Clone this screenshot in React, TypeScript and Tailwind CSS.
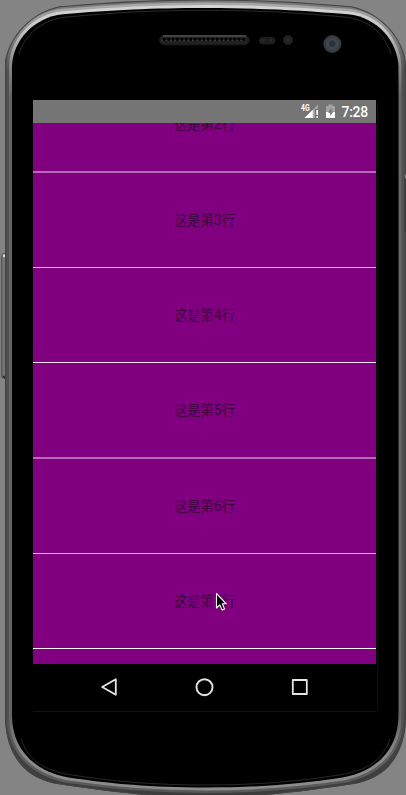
import React from "react";

const outer =
  "M5 66 C5 44 26 13 60 6.3 C110 2 150 -0.5 205.5 -0.5 C261 -0.5 301 2 351 6.3 C385 13 406 44 406 66 V715 C406 754 387 780 350 784.5 C300 792 261 797 205.5 797 C150 797 111 792 61 784.5 C24 780 5 754 5 715 Z";
const inner =
  "M12 66 C13 41 33 17.5 63 14.3 C112 10 152 8 205.5 8 C259 8 299 10 348 14.3 C378 17.5 397 41 398.5 66 V715 C398.5 746 381 769.5 344 777.3 C299 784 260 787.5 205.5 787.5 C151 787.5 112 784 67 777.3 C30 769.5 12 746 12 715 Z";

const holes = Array.from({ length: 19 }, (_, i) => 164 + i * 4.4);

function Bezel() {
  return (
    <svg className="absolute inset-0" width="406" height="795" viewBox="0 0 406 795">
      <defs>
        <linearGradient id="rim" x1="0" y1="0" x2="0" y2="795" gradientUnits="userSpaceOnUse">
          <stop offset="0" stopColor="#7c7c7c" />
          <stop offset="0.04" stopColor="#6c6c6c" />
          <stop offset="0.09" stopColor="#4c4c4c" />
          <stop offset="0.9" stopColor="#464646" />
          <stop offset="1" stopColor="#3c3c3c" />
        </linearGradient>
        <linearGradient id="glow" x1="0" y1="0" x2="0" y2="795" gradientUnits="userSpaceOnUse">
          <stop offset="0" stopColor="#adadad" />
          <stop offset="0.04" stopColor="#8c8c8c" />
          <stop offset="0.09" stopColor="#505050" />
          <stop offset="0.9" stopColor="#505050" />
          <stop offset="0.95" stopColor="#606060" />
          <stop offset="1" stopColor="#585858" />
        </linearGradient>
        <linearGradient id="shine" x1="0" y1="0" x2="0" y2="795" gradientUnits="userSpaceOnUse">
          <stop offset="0" stopColor="#d8d8d8" />
          <stop offset="0.04" stopColor="#c4c4c4" />
          <stop offset="0.08" stopColor="#8a8a8a" />
          <stop offset="0.12" stopColor="#666" />
          <stop offset="0.9" stopColor="#646464" />
          <stop offset="0.95" stopColor="#8a8a8a" />
          <stop offset="1" stopColor="#8c8c8c" />
        </linearGradient>
        <clipPath id="body">
          <path d={outer} />
        </clipPath>
      </defs>
      <rect x="1.7" y="253.5" width="7" height="125" rx="2.5" fill="#757575" stroke="#484848" strokeWidth="0.9" />
      <circle cx="4.2" cy="255.7" r="1.5" fill="#ddd" />
      <path d="M3 376 L6 378.5" stroke="#222" strokeWidth="1.5" />
      <path d={outer} fill="url(#rim)" />
      <g clipPath="url(#body)">
        <path d={inner} fill="none" stroke="url(#glow)" strokeWidth="11" />
        <path d={inner} fill="none" stroke="url(#shine)" strokeWidth="6" />
        <path d={outer} fill="none" stroke="#444" strokeWidth="1.8" />
      </g>
      <rect x="404.5" y="175" width="3" height="57" fill="#3c3c3c" />
      <rect x="404.8" y="174.5" width="2" height="4" fill="#888" />
      <path d={inner} fill="#000" />
      <path
        d="M19 54 C26 32 44 19 67 17 C115 12.5 155 10.3 205.5 10.3 C256 10.3 296 12.5 344 17 C367 19 384 32 391 54"
        fill="none" stroke="#303030" strokeWidth="0.9"
      />
      <path
        d="M21 739 C29 762 45 770 69 774.5 C113 781.5 153 785 205.5 785 C258 785 298 781.5 342 774.5 C366 770 382 762 390 739"
        fill="none" stroke="#2c2c2c" strokeWidth="0.9"
      />
      <rect x="159.5" y="35.5" width="89.5" height="9.3" rx="4.6" fill="#202020" stroke="#222" strokeWidth="0.7" />
      <path d="M163 36 H246" stroke="#666" strokeWidth="1.2" />
      {holes.map((x) => (
        <g key={x}>
          <rect x={x - 1} y="38" width="2.6" height="2.6" fill="#000" />
          <rect x={x - 2.8} y="40.2" width="1.8" height="1" fill="#444" />
        </g>
      ))}
      <rect x="259" y="37" width="16.5" height="7.5" rx="3.7" fill="#1d1d1d" />
      <circle cx="263.5" cy="40.5" r="1.5" fill="#292929" />
      <circle cx="271" cy="40.5" r="1.5" fill="#292929" />
      <circle cx="288" cy="40" r="5" fill="#1f1f1f" />
      <circle cx="288" cy="40" r="2" fill="#303030" />
      <circle cx="332.3" cy="44" r="9" fill="#353b42" />
      <circle cx="332.3" cy="44" r="6.5" fill="#3f464e" />
      <circle cx="332.3" cy="43.8" r="3.2" fill="#2a3036" />
      <path d="M33 711.5 H376 M377.5 101 V710" stroke="#0f0f0f" strokeWidth="1" fill="none" />
    </svg>
  );
}

function StatusBar() {
  return (
    <div className="flex h-[23px] items-center justify-end bg-[#757575] pr-[8px]">
      <svg width="40" height="23" viewBox="300 100 40 23" className="mr-[2px] shrink-0">
        <text x="302" y="110.8" fill="#fff" fontSize="8.5" fontWeight="700" textLength="8.5" lengthAdjust="spacingAndGlyphs" fontFamily="Roboto, sans-serif">4G</text>
        <path d="M305.5 118 L319 104.5 V109 H316 V118 Z" fill="#a5a5a5" />
        <path d="M305.5 118 L313.8 109.7 V118 Z" fill="#fff" />
        <path d="M318.2 110 V115 M318.2 116.3 V118" stroke="#fff" strokeWidth="1.6" />
        <path d="M327 106 H329.5 V104.5 H333.5 V106 H336 V118 H327 Z" fill="#a3a3a3" />
        <path d="M327 112 H336 V118 H327 Z" fill="#fff" />
        <path d="M332.5 107.5 L329 112.8 H331.2 V116 L334.5 111.4 H332.5 Z" fill="#757575" />
      </svg>
      <span className="pt-px font-[Roboto,sans-serif] text-[14px] leading-[22px] font-medium tracking-[-0.25px] text-white">7:28</span>
    </div>
  );
}

const rows = [
  { n: 2, cls: "h-[95px]", line: "h-[2px] bg-[#b56ab5]" },
  { n: 3, cls: "h-[95px]", line: "h-px bg-[#dbb7db]" },
  { n: 4, cls: "h-[95px]", line: "h-px bg-[#f2e4f2]" },
  { n: 5, cls: "h-[96px]", line: "h-[2px] bg-[#b56ab5]" },
  { n: 6, cls: "h-[95px]", line: "h-px bg-[#dbb7db]" },
  { n: 7, cls: "h-[95px]", line: "h-px bg-[#fbf5fb]" },
];

function List() {
  return (
    <div className="h-[541px] overflow-hidden bg-[#800080]">
      <div className="-mt-[45px]">
        {rows.map((r) => (
          <div key={r.n} className={`flex flex-col ${r.cls}`}>
            <div className="flex flex-1 items-center justify-center text-[13.2px] leading-5 text-[#3e063e]">
              <span>
                这是第<span className="font-[Roboto,sans-serif] text-[14px]">{r.n}</span>行
              </span>
            </div>
            <div className={`shrink-0 ${r.line}`} />
          </div>
        ))}
      </div>
    </div>
  );
}

function NavBar() {
  return (
    <div className="flex h-[47px] items-center justify-between bg-black pr-[66px] pl-[67px]">
      <svg width="20" height="20" fill="none" stroke="#e4e4e4" strokeWidth="1.8" strokeLinejoin="round">
        <path d="M15.8 1.2 V16.8 L2.2 9 Z" />
      </svg>
      <svg width="20" height="20" fill="none" stroke="#e4e4e4" strokeWidth="1.9">
        <circle cx="9.5" cy="9.2" r="8" />
      </svg>
      <svg width="20" height="20" fill="none" stroke="#e4e4e4" strokeWidth="1.8" strokeLinejoin="round">
        <rect x="2.8" y="2" width="14" height="14" />
      </svg>
    </div>
  );
}

export default function App() {
  return (
    <div className="relative h-[795px] w-[406px] overflow-hidden bg-[#848484] font-['Roboto','Noto_Sans_CJK_SC',sans-serif]">
      <Bezel />
      <main className="relative mt-[100px] ml-[33px] w-[343px]">
        <StatusBar />
        <List />
        <NavBar />
      </main>
      <svg className="absolute top-[592px] left-[214px]" width="16" height="22" viewBox="0 0 16 22">
        <path d="M2.5 1.5 V16 L5.7 12.8 L8.2 18 L10.6 17 L8.3 11.8 H12.3 Z" fill="#000" stroke="#fff" strokeWidth="1.1" strokeLinejoin="round" />
      </svg>
    </div>
  );
}
